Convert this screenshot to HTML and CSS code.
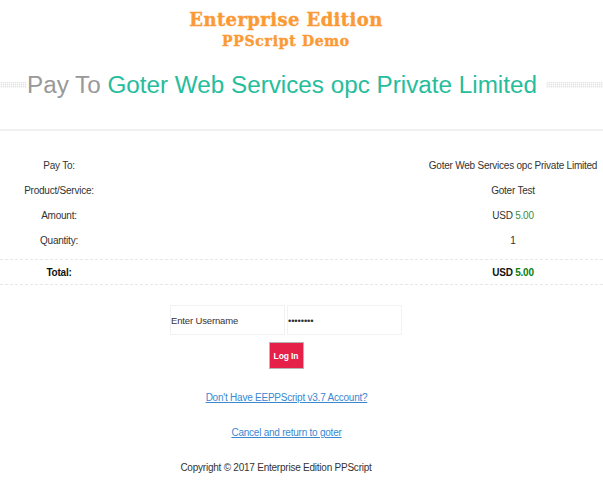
FILE: index.html
```html
<!DOCTYPE html>
<html lang="en">
<head>
<meta charset="utf-8">
<title>Pay To Goter Web Services opc Private Limited</title>
<link rel="stylesheet" href="styles.css">
</head>
<body>
<header class="brand">
  <div class="brand-main">Enterprise Edition</div>
  <div class="brand-sub">PPScript Demo</div>
</header>
<div class="title-row">
  <span class="dots dots-left"></span>
  <h1 class="title">Pay To <span class="title-name">Goter Web Services opc Private Limited</span></h1>
  <span class="dots dots-right"></span>
</div>
<hr class="rule">
<section class="summary">
  <div class="row"><span class="label">Pay To:</span><span class="value">Goter Web Services opc Private Limited</span></div>
  <div class="row"><span class="label">Product/Service:</span><span class="value">Goter Test</span></div>
  <div class="row"><span class="label">Amount:</span><span class="value">USD <span class="amount">5.00</span></span></div>
  <div class="row"><span class="label">Quantity:</span><span class="value">1</span></div>
  <div class="row row-total"><span class="label">Total:</span><span class="value">USD <span class="amount-total">5.00</span></span></div>
</section>
<form class="login">
  <div class="fields">
    <input class="field" type="text" value="Enter Username" aria-label="Username">
    <input class="field" type="password" value="password" aria-label="Password">
  </div>
  <button class="submit" type="button">Log In</button>
</form>
<nav class="links">
  <a href="#">Don't Have EEPPScript v3.7 Account?</a>
  <a href="#">Cancel and return to goter</a>
</nav>
<footer class="copyright">Copyright © 2017 Enterprise Edition PPScript</footer>
</body>
</html>
```
FILE: styles.css
```css
* { box-sizing: border-box; }
html, body { margin: 0; padding: 0; background: #fff; }
body {
  width: 603px;
  height: 480px;
  overflow: hidden;
  font-family: "Liberation Sans", Arial, sans-serif;
  font-size: 10px;
  letter-spacing: -0.23px;
  color: #333;
}
.brand {
  padding: 9px 31px 0 0;
  text-align: center;
  color: #fb9a35;
  font-family: "DejaVu Serif", serif;
  font-weight: 700;
  -webkit-text-stroke: 0.4px #fb9a35;
}
.brand-main { font-size: 18px; line-height: 22px; letter-spacing: 0.4px; }
.brand-sub { font-size: 14px; line-height: 20px; letter-spacing: 0.7px; }
.title-row {
  display: flex;
  align-items: center;
  margin-top: 12px;
  height: 44px;
}
.dots {
  height: 6px;
  background-color: #e4e4e4;
  background-image:
    repeating-linear-gradient(90deg, rgba(255, 255, 255, 0.6) 0 1px, transparent 1px 2px),
    repeating-linear-gradient(0deg, rgba(255, 255, 255, 0.6) 0 1px, transparent 1px 2px);
}
.dots-left { width: 27px; }
.dots-right { flex: 1; margin-left: 9px; }
.title {
  margin: 0;
  font-size: 24.25px;
  font-weight: 400;
  letter-spacing: 0;
  color: #999;
  white-space: nowrap;
}
.title-name { color: #26bd9c; }
.rule {
  margin: 22px 0 0;
  border: 0;
  border-top: 2px solid #f0f0f0;
}
.summary { margin-top: 22px; }
.row {
  display: grid;
  grid-template-columns: 118px 1fr;
  height: 25px;
  align-items: center;
}
.label { text-align: center; }
.value { justify-self: end; width: 180px; text-align: center; white-space: nowrap; }
.amount { color: #3d8b3d; }
.amount-total { color: #0a7d0a; }
.row-total {
  height: 26px;
  margin-top: 6px;
  border-top: 1px dashed #e8e8e8;
  border-bottom: 1px dashed #e8e8e8;
  font-weight: 700;
  color: #111;
}
.login {
  margin-top: 20px;
  padding-right: 31px;
  display: flex;
  flex-direction: column;
  align-items: center;
}
.fields { display: flex; gap: 2px; }
.field {
  width: 115px;
  height: 30px;
  padding: 0;
  border: 1px solid #f2f2f2;
  font-family: inherit;
  font-size: 9.5px;
  letter-spacing: -0.15px;
  color: #333;
  outline: 0;
}
.submit {
  margin-top: 7px;
  width: 35px;
  height: 27px;
  padding: 0;
  border: 1px solid #b5b5b5;
  background: #e5214a;
  color: #fff;
  font-family: inherit;
  font-size: 8.5px;
  letter-spacing: -0.1px;
  font-weight: 700;
}
.links {
  display: flex;
  flex-direction: column;
  align-items: center;
  gap: 23px;
  margin-top: 23px;
  padding-right: 30px;
}
.links a { color: #3b87d0; line-height: 12px; }
.copyright { margin-top: 23px; padding-right: 51px; text-align: center; line-height: 12px; }
```
